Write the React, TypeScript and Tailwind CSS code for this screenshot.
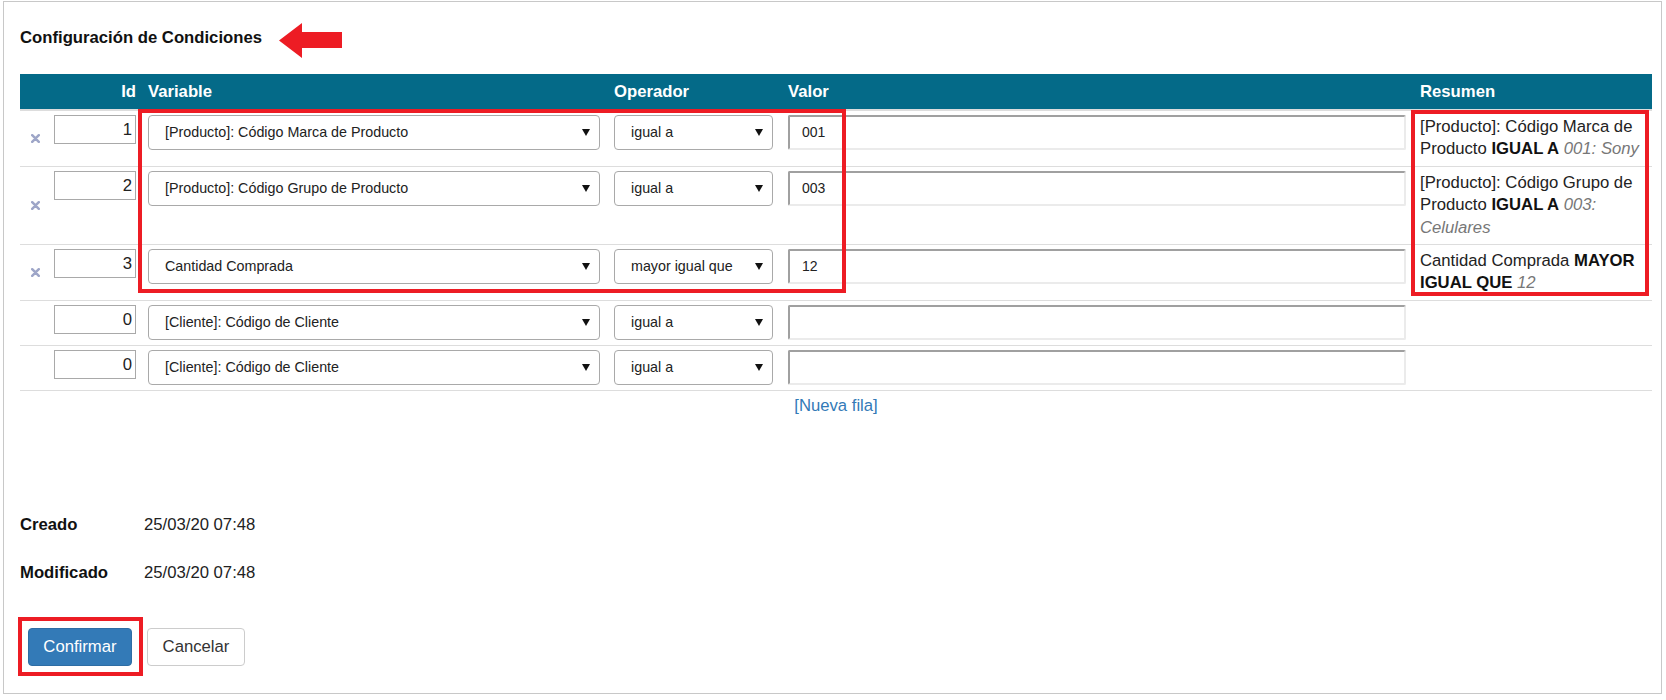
import React from "react";

type Row = {
  id: string;
  variable: string;
  operador: string;
  valor: string;
  removable: boolean;
  resumen?: { text: string; op: string; val: string };
};

const rows: Row[] = [
  {
    id: "1",
    variable: "[Producto]: Código Marca de Producto",
    operador: "igual a",
    valor: "001",
    removable: true,
    resumen: { text: "[Producto]: Código Marca de Producto", op: "IGUAL A", val: "001: Sony" },
  },
  {
    id: "2",
    variable: "[Producto]: Código Grupo de Producto",
    operador: "igual a",
    valor: "003",
    removable: true,
    resumen: { text: "[Producto]: Código Grupo de Producto", op: "IGUAL A", val: "003: Celulares" },
  },
  {
    id: "3",
    variable: "Cantidad Comprada",
    operador: "mayor igual que",
    valor: "12",
    removable: true,
    resumen: { text: "Cantidad Comprada", op: "MAYOR IGUAL QUE", val: "12" },
  },
  { id: "0", variable: "[Cliente]: Código de Cliente", operador: "igual a", valor: "", removable: false },
  { id: "0", variable: "[Cliente]: Código de Cliente", operador: "igual a", valor: "", removable: false },
];

const Select = ({ value, width }: { value: string; width: string }) => (
  <div
    className={`flex h-[35px] ${width} items-center justify-between rounded-[4px] border border-[#a9a9a9] bg-white pl-4 pr-[9px] text-[14.3px] text-[#222]`}
  >
    <span>{value}</span>
    <svg width="8" height="7" viewBox="0 0 8 7">
      <polygon points="0,0 8,0 4,7" fill="#111" />
    </svg>
  </div>
);

const App = () => {
  return (
    <div className="min-h-[700px] bg-white pl-[3px] pt-[1px] font-['Liberation_Sans',Arial,sans-serif] text-[#222]">
      <div className="relative h-[693px] w-[1659px] border border-[#c8c8c8] pl-4 pr-[9px]">
        {/* titulo */}
        <div className="mt-[21px] flex items-start">
          <h1 className="mt-[3px] text-[16.7px] font-bold leading-[23px] text-[#111]">
            Configuración de Condiciones
          </h1>
          <svg className="ml-[17px]" width="63" height="35" viewBox="0 0 63 35">
            <polygon points="0,17.5 23,0 23,9 63,9 63,25 23,25 23,35" fill="#ed1c24" />
          </svg>
        </div>

        {/* tabla */}
        <div className="mt-4 w-[1632px]">
          <div className="grid h-[37px] grid-cols-[29px_93px_466px_174px_630px_1fr] items-center border-b-2 border-[#ddd] bg-[#046a88] text-[16.7px] font-bold text-white">
            <div />
            <div className="pr-[6px] text-right">Id</div>
            <div className="pl-[6px]">Variable</div>
            <div className="pl-[6px]">Operador</div>
            <div className="pl-[6px]">Valor</div>
            <div className="pl-2">Resumen</div>
          </div>
          {rows.map((r, i) => (
            <div
              key={i}
              className="grid grid-cols-[29px_93px_466px_174px_630px_1fr] border-b border-[#ddd]"
            >
              <div className="flex items-center justify-center pl-[2px]">
                {r.removable && (
                  <svg width="9" height="9" viewBox="0 0 9 9">
                    <path d="M1.2 1.2 L7.8 7.8 M7.8 1.2 L1.2 7.8" stroke="#9ea6c8" strokeWidth="2.5" strokeLinecap="round" />
                  </svg>
                )}
              </div>
              <div className="pl-[5px] pt-1 pb-[5px]">
                <div className="flex h-[29px] w-[82px] items-center justify-end border border-[#a9a9a9] pr-[3px] text-[16.7px]">
                  {r.id}
                </div>
              </div>
              <div className="pl-[6px] pt-1 pb-[5px]">
                <Select value={r.variable} width="w-[452px]" />
              </div>
              <div className="pl-[6px] pt-1 pb-[5px]">
                <Select value={r.operador} width="w-[159px]" />
              </div>
              <div className="pl-[6px] pt-1 pb-[5px]">
                <div className="flex h-[35px] w-[618px] items-center rounded-[2px] border-2 border-t-[#a0a0a0] border-l-[#a0a0a0] border-b-[#ebebeb] border-r-[#ebebeb] pl-3 text-[14px]">
                  {r.valor}
                </div>
              </div>
              <div className="py-[5px] pl-2 pr-[5px] text-[16.7px] leading-[22.4px]">
                {r.resumen && (
                  <>
                    {r.resumen.text} <b className="text-[#111]">{r.resumen.op}</b>{" "}
                    <i className="text-[#777]">{r.resumen.val}</i>
                  </>
                )}
              </div>
            </div>
          ))}
          <div className="mt-1 text-center text-[16.7px] leading-[22px]">
            <a href="#" className="text-[#337ab7]">
              [Nueva fila]
            </a>
          </div>
        </div>

        {/* fechas */}
        <div className="mt-[97px] flex text-[16.7px] leading-[22px]">
          <span className="w-[124px] font-bold text-[#111]">Creado</span>
          <span>25/03/20 07:48</span>
        </div>
        <div className="mt-[26px] flex text-[16.7px] leading-[22px]">
          <span className="w-[124px] font-bold text-[#111]">Modificado</span>
          <span>25/03/20 07:48</span>
        </div>

        {/* botones */}
        <div className="ml-2 mt-[44px] flex gap-[15px]">
          <button className="h-[38px] w-[104px] rounded-[4px] border border-[#2e6da4] bg-[#337ab7] text-[16.7px] text-white">
            Confirmar
          </button>
          <button className="h-[38px] w-[98px] rounded-[4px] border border-[#ccc] bg-white text-[16.7px] text-[#333]">
            Cancelar
          </button>
        </div>

        {/* marcas rojas */}
        <div className="absolute left-[134px] top-[107px] h-[184px] w-[708px] border-4 border-[#ed1c24]" />
        <div className="absolute left-[1407px] top-[108px] h-[186px] w-[238px] border-4 border-[#ed1c24]" />
        <div className="absolute left-[14px] top-[615px] h-[59px] w-[125px] border-4 border-[#ed1c24]" />
      </div>
    </div>
  );
};

export default App;
